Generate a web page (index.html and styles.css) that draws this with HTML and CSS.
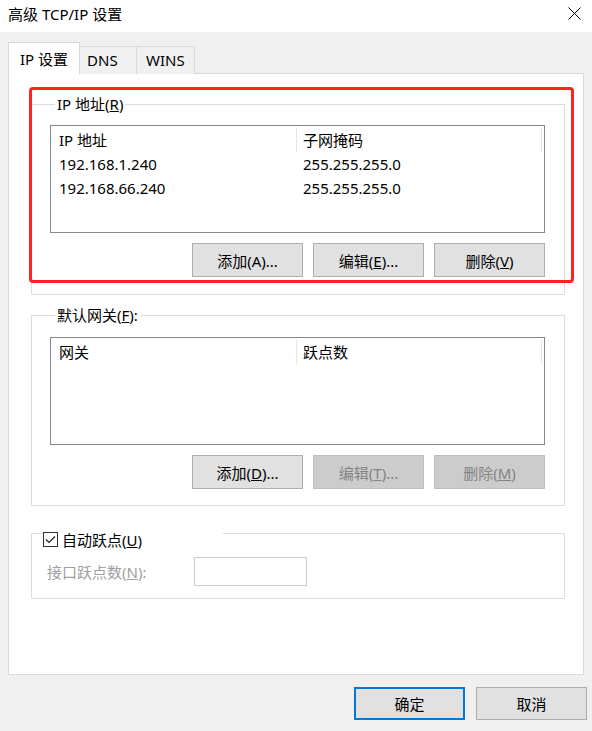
FILE: index.html
```html
<!DOCTYPE html>
<html lang="zh-CN">
<head>
    <meta charset="UTF-8">
    <title>高级 TCP/IP 设置</title>
    <link rel="stylesheet" href="styles.css">
</head>
<body>
<div class="dialog">
    <div class="titlebar">
        <span class="title">高级 TCP/IP 设置</span>
        <svg class="close" width="13" height="13" viewBox="0 0 13 13">
            <path d="M0.5 0.5 L12.5 12.5 M12.5 0.5 L0.5 12.5" stroke="#000" stroke-width="1" fill="none"/>
        </svg>
    </div>

    <div class="tabs">
        <div class="tab active">IP 设置</div>
        <div class="tab tab-dns">DNS</div>
        <div class="tab tab-wins">WINS</div>
    </div>

    <div class="panel">
        <fieldset class="group group-ip">
            <legend>IP 地址(<u>R</u>)</legend>
            <div class="listbox">
                <div class="row header">
                    <div class="col col1">IP 地址</div>
                    <div class="col col2">子网掩码</div>
                </div>
                <div class="row">
                    <div class="col col1">192.168.1.240</div>
                    <div class="col col2">255.255.255.0</div>
                </div>
                <div class="row">
                    <div class="col col1">192.168.66.240</div>
                    <div class="col col2">255.255.255.0</div>
                </div>
            </div>
            <div class="buttons">
                <button class="btn">添加(A)...</button>
                <button class="btn">编辑(<u>E</u>)...</button>
                <button class="btn">删除(<u>V</u>)</button>
            </div>
            <!-- highlight frame around the address group -->
            <div class="mark"></div>
        </fieldset>

        <fieldset class="group group-gw">
            <legend>默认网关(<u>F</u>):</legend>
            <div class="listbox">
                <div class="row header">
                    <div class="col col1">网关</div>
                    <div class="col col2">跃点数</div>
                </div>
            </div>
            <div class="buttons">
                <button class="btn">添加(<u>D</u>)...</button>
                <button class="btn" disabled>编辑(<u>T</u>)...</button>
                <button class="btn" disabled>删除(<u>M</u>)</button>
            </div>
        </fieldset>

        <fieldset class="group group-metric">
            <legend>
                <svg class="check" width="15" height="15" viewBox="0 0 15 15">
                    <rect x="0.5" y="0.5" width="14" height="14" fill="#fff" stroke="#333"/>
                    <path d="M3 7.5 L6 10.5 L12 4.5" stroke="#222" stroke-width="1.2" fill="none"/>
                </svg>
                <span>自动跃点(<u>U</u>)</span>
            </legend>
            <div class="metric-row">
                <span class="label-disabled">接口跃点数(<u>N</u>):</span>
                <div class="input"></div>
            </div>
        </fieldset>
    </div>

    <div class="footer">
        <button class="btn btn-default">确定</button>
        <button class="btn">取消</button>
    </div>
</div>
</body>
</html>
```

FILE: styles.css
```css
body {
    margin: 0;
    background: #f0f0f0;
    font-family: "Noto Sans", "Noto Sans CJK SC", sans-serif;
    font-size: 15px;
    color: #000;
}
.dialog {
    width: 592px;
    height: 731px;
    display: flex;
    flex-direction: column;
}
.titlebar {
    height: 32px;
    background: #fff;
    display: flex;
    align-items: center;
    justify-content: space-between;
    padding: 0 11px 0 8px;
}
.title {
    font-size: 15px;
    margin-top: -6px;
}
.close {
    margin-top: -6px;
}
.tabs {
    display: flex;
    align-items: flex-end;
    margin-top: 10px;
    padding-left: 8px;
    position: relative;
    z-index: 1;
    margin-bottom: -1px;
}
.tab {
    height: 27px;
    line-height: 27px;
    border: 1px solid #d9d9d9;
    border-bottom: none;
    border-left: none;
    background: #f0f0f0;
    box-sizing: content-box;
}
.tab.active {
    height: 31px;
    line-height: 33px;
    background: #fff;
    border-left: 1px solid #d9d9d9;
    padding: 0 11px;
}
.tab-dns {
    width: 49px;
    padding-left: 7px;
}
.tab-wins {
    width: 48px;
    padding-left: 9px;
}
.panel {
    margin: 0 8px;
    height: 600px;
    background: #fff;
    border: 1px solid #d9d9d9;
    padding: 0 18px 0 22px;
}
.group {
    margin: 0;
    border: 1px solid #dcdcdc;
    padding: 0 19px 0 18px;
    position: relative;
}
.group legend {
    padding: 0 2px;
    margin-left: 5px;
    line-height: 20px;
}
.group-ip {
    margin-top: 20px;
    padding-top: 11px;
    padding-bottom: 17px;
}
.group-gw {
    margin-top: 10px;
    padding-top: 12px;
    padding-bottom: 16px;
}
.group-metric {
    margin-top: 13px;
    padding: 10px 10px 12px 15px;
}
/* the check box hangs below the frame line, as in the native control */
.group-metric legend {
    margin-left: -4px;
    width: 180px;
    height: 15px;
    padding: 13px 0 0;
    display: flex;
    align-items: center;
    gap: 4px;
}
.check {
    display: block;
}
.listbox {
    height: 106px;
    border: 1px solid #828790;
}
.row {
    display: flex;
    height: 24px;
    align-items: center;
}
.row.header {
    height: 26px;
}
.col {
    box-sizing: border-box;
}
.col1 {
    width: 246px;
    padding-left: 8px;
}
.col2 {
    width: 245px;
    padding-left: 6px;
}
.header .col {
    height: 25px;
    line-height: 26px;
    border-right: 1px solid #e5e5e5;
}
.buttons {
    display: flex;
    justify-content: flex-end;
    gap: 10px;
    margin-top: 10px;
}
.btn {
    width: 111px;
    height: 34px;
    background: #e1e1e1;
    border: 1px solid #adadad;
    font-family: inherit;
    font-size: 15px;
    color: #000;
    padding: 0;
}
.btn:disabled {
    background: #cccccc;
    border-color: #bfbfbf;
    color: #838383;
}
.mark {
    position: absolute;
    left: -3px;
    top: -27px;
    width: 539px;
    height: 190px;
    border: 3px solid #ff2323;
    border-radius: 4px;
}
.metric-row {
    display: flex;
    align-items: center;
    gap: 22px;
}
.label-disabled {
    color: #a0a0a0;
    width: 125px;
}
.input {
    width: 111px;
    height: 27px;
    border: 1px solid #cccccc;
}
.footer {
    display: flex;
    justify-content: flex-end;
    gap: 11px;
    margin-top: 12px;
    padding-right: 5px;
}
.footer .btn {
    height: 33px;
}
.btn-default {
    border: 2px solid #0078d7;
}
```
